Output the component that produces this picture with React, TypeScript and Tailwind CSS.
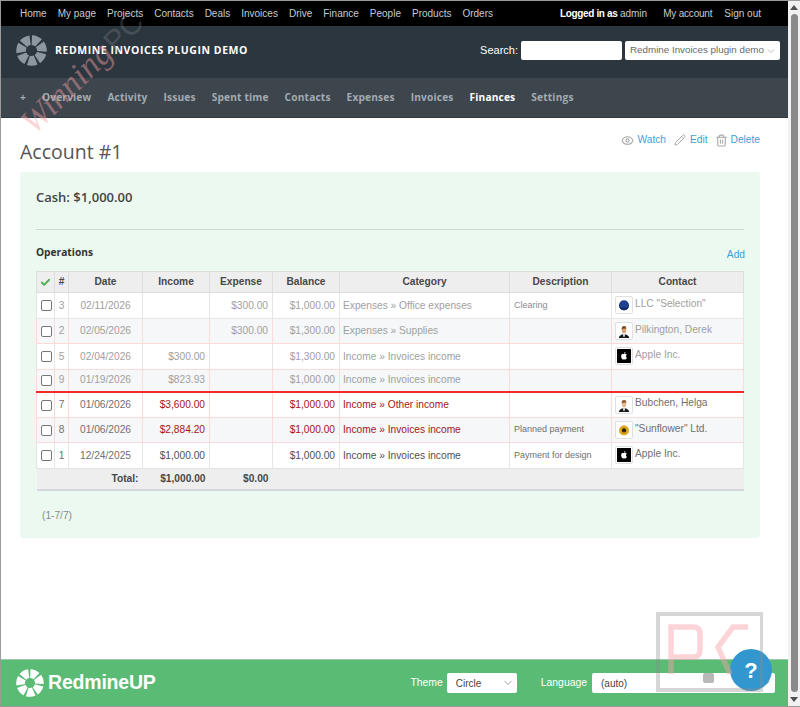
import { Check, ChevronDown, Eye, Pencil, Trash2 } from 'lucide-react'

const topLinks = ['Home', 'My page', 'Projects', 'Contacts', 'Deals', 'Invoices', 'Drive', 'Finance', 'People', 'Products', 'Orders']
const tabs = ['+', 'Overview', 'Activity', 'Issues', 'Spent time', 'Contacts', 'Expenses', 'Invoices', 'Finances', 'Settings']

type Avatar = 'selection' | 'derek' | 'apple' | 'helga' | 'sunflower' | null

interface Operation {
  id: number
  date: string
  income: string
  expense: string
  balance: string
  category: string
  description: string
  contact: string
  avatar: Avatar
  tone: 'past' | 'planned' | 'plain'
}

const operations: Operation[] = [
  { id: 3, date: '02/11/2026', income: '', expense: '$300.00', balance: '$1,000.00', category: 'Expenses » Office expenses', description: 'Clearing', contact: 'LLC "Selection"', avatar: 'selection', tone: 'past' },
  { id: 2, date: '02/05/2026', income: '', expense: '$300.00', balance: '$1,300.00', category: 'Expenses » Supplies', description: '', contact: 'Pilkington, Derek', avatar: 'derek', tone: 'past' },
  { id: 5, date: '02/04/2026', income: '$300.00', expense: '', balance: '$1,300.00', category: 'Income » Invoices income', description: '', contact: 'Apple Inc.', avatar: 'apple', tone: 'past' },
  { id: 9, date: '01/19/2026', income: '$823.93', expense: '', balance: '$1,000.00', category: 'Income » Invoices income', description: '', contact: '', avatar: null, tone: 'past' },
  { id: 7, date: '01/06/2026', income: '$3,600.00', expense: '', balance: '$1,000.00', category: 'Income » Other income', description: '', contact: 'Bubchen, Helga', avatar: 'helga', tone: 'planned' },
  { id: 8, date: '01/06/2026', income: '$2,884.20', expense: '', balance: '$1,000.00', category: 'Income » Invoices income', description: 'Planned payment', contact: '"Sunflower" Ltd.', avatar: 'sunflower', tone: 'planned' },
  { id: 1, date: '12/24/2025', income: '$1,000.00', expense: '', balance: '$1,000.00', category: 'Income » Invoices income', description: 'Payment for design', contact: 'Apple Inc.', avatar: 'apple', tone: 'plain' },
]

function RingLogo({ className }: { className: string }) {
  return (
    <svg viewBox="0 0 32 32" className={className} fill="none">
      <circle
        cx="16"
        cy="16"
        r="10.75"
        stroke="currentColor"
        strokeWidth="10"
        pathLength={70}
        strokeDasharray="8 2"
        transform="rotate(-88 16 16)"
      />
    </svg>
  )
}

function Person({ hair, skin }: { hair: string; skin: string }) {
  return (
    <svg viewBox="0 0 16 16" className="h-[14px] w-[14px]">
      <rect width="16" height="16" fill="#fff" />
      <path d="M2 16 Q2.5 12 8 11.6 Q13.5 12 14 16 Z" fill="#15181c" />
      <path d="M6.6 11.6 L9.4 11.6 L8.3 15 L7.7 15 Z" fill="#f2f2f2" />
      <ellipse cx="8" cy="6.8" rx="2.5" ry="3.9" fill={skin} />
      <path d="M5.4 6.4 Q5 2.4 8 2.4 Q11 2.4 10.6 5.8 Q8.5 4 5.4 6.4 Z" fill={hair} />
    </svg>
  )
}

function ContactAvatar({ kind }: { kind: Exclude<Avatar, null> }) {
  let art = null
  if (kind === 'selection') {
    art = (
      <svg viewBox="0 0 16 16" className="h-[14px] w-[14px]">
        <circle cx="8" cy="8.5" r="5.8" fill="#1f3f8f" />
        <path d="M2.6 10 A5.8 5.8 0 0 0 13.4 10 Q8 12.6 2.6 10 Z" fill="#12275c" />
      </svg>
    )
  } else if (kind === 'derek') {
    art = <Person hair="#7a4a20" skin="#e0a070" />
  } else if (kind === 'helga') {
    art = <Person hair="#8a5a34" skin="#eeb68c" />
  } else if (kind === 'apple') {
    art = (
      <svg viewBox="0 0 16 16" className="h-[14px] w-[14px]">
        <rect width="16" height="16" fill="#000" />
        <path d="M8 6 C6.6 5.2 4.8 5.6 4.7 8 C4.6 10 6 12 6.9 12 C7.4 12 7.6 11.7 8.1 11.7 C8.6 11.7 8.8 12 9.3 12 C10.2 12 11 10.7 11.3 9.9 C9.9 9.2 9.9 7.2 11.2 6.5 C10.3 5.3 8.9 5.4 8 6 Z" fill="#fff" />
        <path d="M8 5.4 C8 4.4 8.7 3.6 9.7 3.5 C9.7 4.5 9 5.3 8 5.4 Z" fill="#fff" />
      </svg>
    )
  } else {
    art = (
      <svg viewBox="0 0 16 16" className="h-[14px] w-[14px]">
        <circle cx="8" cy="8.5" r="5.6" fill="#e0a21a" />
        <circle cx="8" cy="8.5" r="2.4" fill="#2a2110" />
      </svg>
    )
  }
  return (
    <span className="mr-[2px] inline-flex h-[18px] w-[18px] shrink-0 items-center justify-center rounded-[2px] border border-[#e0e0e0] bg-white">
      {art}
    </span>
  )
}

function HeadCell({ children }: { children?: React.ReactNode }) {
  return (
    <th className="border border-[#dddddd] bg-[#eeeeee] p-0 text-center text-[10.2px] font-bold text-[#484848]">
      {children}
    </th>
  )
}

function OperationRow({ op, index }: { op: Operation; index: number }) {
  const striped = index % 2 === 1
  const rowBg = striped ? 'bg-[#f6f7f8]' : 'bg-white'
  const pink = op.tone === 'plain' ? 'border-[#e4e4e4]' : index === 0 ? 'border-[#e6e6e6]' : 'border-[#fbdada]'
  const side = striped || op.tone === 'planned' ? 'border-x-[#fbdada]' : 'border-x-[#e6e6e6]'
  const muted = op.tone === 'past' ? 'text-[#a0a0a0]' : 'text-[#707070]'
  const money = op.tone === 'past' ? 'text-[#a0a0a0]' : op.tone === 'planned' ? 'text-[#a81414]' : 'text-[#505050]'
  const category = op.tone === 'past' ? 'text-[#a0a0a0]' : op.tone === 'planned' ? 'text-[#a81414]' : 'text-[#505050]'
  const cell = `border ${pink} ${side} p-0 ${op.id === 9 ? 'border-b-2 border-b-[#f42a2a]' : ''}`
  const height = op.avatar ? 'h-[25.5px]' : 'h-[22.5px]'
  return (
    <tr className={`${rowBg} ${height} text-[10.2px]`}>
      <td className={`${cell} pl-[1px] text-center`}>
        <span className="inline-block h-[11px] w-[11px] rounded-[2px] border border-[#767676] bg-white align-middle" />
      </td>
      <td className={`${cell} text-center ${muted}`}>{op.id}</td>
      <td className={`${cell} text-center ${muted}`}>{op.date}</td>
      <td className={`${cell} pr-[4px] text-right ${money}`}>{op.income}</td>
      <td className={`${cell} pr-[4px] text-right ${money}`}>{op.expense}</td>
      <td className={`${cell} pr-[4px] text-right ${money}`}>{op.balance}</td>
      <td className={`${cell} pl-[3px] ${category}`}>{op.category}</td>
      <td className={`${cell} pl-[4px] text-[9px] ${op.tone === 'past' ? 'text-[#8a8a8a]' : 'text-[#6f6f6f]'}`}>{op.description}</td>
      <td className={`${cell} pl-[3px] ${muted}`}>
        {op.avatar && (
          <span className="flex items-center">
            <ContactAvatar kind={op.avatar} />
            <span className="-mt-[3px]">{op.contact}</span>
          </span>
        )}
      </td>
    </tr>
  )
}

function OperationsTable() {
  return (
    <table className="w-[707px] table-fixed border-collapse">
      <colgroup>
        <col className="w-[18px]" />
        <col className="w-[14px]" />
        <col className="w-[74px]" />
        <col className="w-[67px]" />
        <col className="w-[63px]" />
        <col className="w-[67px]" />
        <col className="w-[170px]" />
        <col className="w-[102px]" />
        <col className="w-[132px]" />
      </colgroup>
      <thead>
        <tr className="h-[21px]">
          <HeadCell>
            <Check className="mx-auto h-[11px] w-[11px] text-[#4caf50]" strokeWidth={4} />
          </HeadCell>
          <HeadCell>#</HeadCell>
          <HeadCell>Date</HeadCell>
          <HeadCell>Income</HeadCell>
          <HeadCell>Expense</HeadCell>
          <HeadCell>Balance</HeadCell>
          <HeadCell>Category</HeadCell>
          <HeadCell>Description</HeadCell>
          <HeadCell>Contact</HeadCell>
        </tr>
      </thead>
      <tbody>
        {operations.map((op, index) => (
          <OperationRow key={op.id} op={op} index={index} />
        ))}
      </tbody>
      <tfoot>
        <tr className="h-[22px] border-b-2 border-b-[#d5d8dc] bg-[#eeeeee] text-[10.2px] font-bold text-[#484848]">
          <td colSpan={3} className="pr-[4px] text-right">Total:</td>
          <td className="pr-[4px] text-right">$1,000.00</td>
          <td className="pr-[4px] text-right">$0.00</td>
          <td colSpan={4} />
        </tr>
      </tfoot>
    </table>
  )
}

function Scrollbar() {
  return (
    <div className="flex w-[12px] shrink-0 flex-col items-center bg-[#f1f1f1] pt-[4px]">
      <span className="h-0 w-0 border-x-[4px] border-b-[5px] border-x-transparent border-b-[#505050]" />
      <span className="mt-[4px] w-[7px] flex-1 rounded-full bg-[#8a8a8a]" />
      <span className="mt-[5px] mb-[4px] h-0 w-0 border-x-[4px] border-t-[5px] border-x-transparent border-t-[#505050]" />
    </div>
  )
}

export default function App() {
  return (
    <div className="relative flex h-[707px] w-[800px] overflow-hidden border-t border-b border-l border-[#9a9a9a] bg-white font-['Liberation_Sans',sans-serif]">
      <div className="flex min-w-0 flex-1 flex-col">
        <div className="flex h-[25px] shrink-0 items-center bg-black pr-[27px] pl-[19px] text-[10px] text-[#c4ccd2]">
          <div className="flex gap-[11px]">
            {topLinks.map((link) => (
              <span key={link}>{link}</span>
            ))}
          </div>
          <div className="ml-auto flex">
            <span className="font-bold tracking-[-0.35px] text-white">
              Logged in as <span className="font-normal tracking-normal text-[#c4ccd2]">admin</span>
            </span>
            <span className="ml-[16px] tracking-[-0.2px]">My account</span>
            <span className="ml-[12px]">Sign out</span>
          </div>
        </div>

        <div className="flex h-[52px] shrink-0 items-center bg-[#2c363e] pr-[8px] pb-[3px] pl-[15px]">
          <RingLogo className="h-[31px] w-[31px] text-[#8f979e]" />
          <span className="ml-[8px] font-['Open_Sans',sans-serif] text-[10.5px] font-bold tracking-[0.55px] text-white">
            REDMINE INVOICES PLUGIN DEMO
          </span>
          <span className="ml-auto text-[11px] text-white">Search:</span>
          <span className="ml-[3px] h-[19px] w-[101px] rounded-[2px] bg-white" />
          <span className="ml-[3px] flex h-[19px] w-[155px] items-center justify-between rounded-[2px] bg-white pr-[3px] pl-[5px] text-[9.8px] whitespace-nowrap text-[#6a6a6a]">
            Redmine Invoices plugin demo
            <ChevronDown className="h-[12px] w-[12px] text-[#aaaaaa]" strokeWidth={1.5} />
          </span>
        </div>

        <div className="flex h-[40px] shrink-0 items-center gap-[16px] border-b border-[#30383f] bg-[#3d454d] pt-[1px] pl-[19px] font-['Open_Sans',sans-serif] text-[10.2px] font-bold tracking-[0.15px] text-[#a3abb2]">
          {tabs.map((tab) => (
            <span key={tab} className={tab === 'Finances' ? 'text-white' : ''}>
              {tab}
            </span>
          ))}
        </div>

        <div className="flex-1 pl-[19px]">
          <div className="flex h-[54px] w-[740px] justify-between">
            <h2 className="mt-[20px] font-['Open_Sans',sans-serif] text-[19.5px] leading-[28px] text-[#555555]">Account #1</h2>
            <div className="mt-[14px] flex h-[16px] items-center text-[10.2px] text-[#3e9fd6]">
              <Eye className="mr-[3px] h-[13px] w-[13px] text-[#a8a8a8]" />
              <span>Watch</span>
              <Pencil className="mr-[4px] ml-[8px] h-[12px] w-[12px] text-[#a8a8a8]" />
              <span>Edit</span>
              <Trash2 className="mr-[3px] ml-[7px] h-[13px] w-[13px] text-[#a8a8a8]" />
              <span>Delete</span>
            </div>
          </div>

          <div className="h-[366px] w-[740px] rounded-[3px] bg-[#ebf9f0] px-[16px]">
            <div className="flex h-[57px] items-center pb-[6px] font-['Open_Sans',sans-serif] text-[13px] font-semibold text-[#444444]">
              Cash: $1,000.00
            </div>
            <div className="h-px w-[708px] bg-[#cfd8d2]" />
            <div className="flex h-[41px] w-[709px] items-center justify-between">
              <span className="mt-[5px] font-['Open_Sans',sans-serif] text-[10.2px] font-bold text-[#333333]">Operations</span>
              <span className="mt-[8px] text-[10.2px] text-[#3e9fd6]">Add</span>
            </div>
            <OperationsTable />
            <div className="mt-[17px] pl-[6px] text-[10.2px] text-[#8a8a8a]">(1-7/7)</div>
          </div>
        </div>

        <div className="flex h-[47px] shrink-0 items-center border-t border-[#9fc9ac] bg-[#5abb75] pr-[13px] pl-[15px]">
          <RingLogo className="h-[28px] w-[28px] text-white" />
          <span className="ml-[4px] text-[19.5px] font-bold tracking-[-0.2px] text-white">RedmineUP</span>
          <span className="ml-auto text-[10.4px] text-white">Theme</span>
          <span className="ml-[4px] flex h-[20px] w-[70px] items-center justify-between rounded-[2px] bg-white pr-[3px] pl-[9px] text-[10px] text-[#444444]">
            Circle
            <ChevronDown className="h-[12px] w-[12px] text-[#777777]" strokeWidth={1.5} />
          </span>
          <span className="ml-[24px] text-[10.4px] text-white">Language</span>
          <span className="ml-[5px] flex h-[20px] w-[183px] items-center justify-between rounded-[2px] bg-white pr-[3px] pl-[9px] text-[10px] text-[#444444]">
            (auto)
            <ChevronDown className="h-[12px] w-[12px] text-[#777777]" strokeWidth={1.5} />
          </span>
        </div>
      </div>

      <Scrollbar />

      {/* watermark text over the header and title */}
      <div className="pointer-events-none absolute top-[54px] left-[-4px] flex w-[170px] -rotate-[45deg] items-baseline justify-center whitespace-nowrap font-['Liberation_Serif',serif] italic">
        <span className="text-[34px] leading-none text-[#f8a0a8]/45">Winning</span>
        <span className="ml-[2px] font-['Liberation_Sans',sans-serif] text-[30px] leading-none not-italic text-[#8a8f94]/30">PC</span>
      </div>

      <span className="absolute top-[648px] left-[729px] flex h-[42px] w-[42px] items-center justify-center rounded-full bg-[#3397cf] text-[22px] font-bold text-white">
        ?
      </span>

      {/* watermark stamp, bottom right */}
      <svg viewBox="0 0 108 80" className="pointer-events-none absolute top-[611px] left-[654px] h-[80px] w-[108px]" fill="none">
        <rect x="3" y="2" width="104" height="76" stroke="#8a8a8a" strokeOpacity="0.35" strokeWidth="4" />
        <path d="M16 62 V15 H38 Q45 15 45 22 V38 Q45 45 38 45 H16" stroke="#f8a0a8" strokeOpacity="0.45" strokeWidth="5.5" />
        <path d="M93 15 H78 L63 35 L75 62" stroke="#f8a0a8" strokeOpacity="0.45" strokeWidth="5.5" />
      </svg>
      <span className="pointer-events-none absolute top-[672px] left-[702px] h-[10px] w-[11px] rounded-[2px] bg-[#9a9a9a]/70" />
    </div>
  )
}
